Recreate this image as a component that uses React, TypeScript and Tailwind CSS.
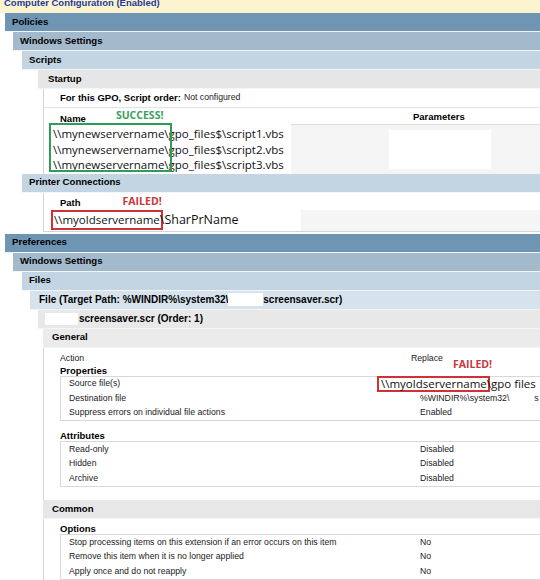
import type { ReactNode } from "react";

const SANS = "font-['Liberation_Sans',Arial,sans-serif]";
const CAL = "font-['Open_Sans','Noto_Sans',sans-serif]";

function Bar({ className, children }: { className: string; children: ReactNode }) {
  return (
    <div
      className={
        "h-[19px] flex items-center border-b border-[#f2f5f8] font-bold text-black whitespace-nowrap overflow-hidden " +
        className
      }
    >
      {children}
    </div>
  );
}

function Row({ label, value, w = "w-[351px]" }: { label: string; value?: ReactNode; w?: string }) {
  return (
    <div className="h-[14.5px] flex items-center pl-[8px] text-[8.7px] text-[#222] whitespace-nowrap">
      <span className={w + " shrink-0"}>{label}</span>
      {value}
    </div>
  );
}

function BoxTitle({ children, className = "" }: { children: ReactNode; className?: string }) {
  return (
    <div className={"h-[10px] leading-[10px] flex items-center pl-[16px] text-[9.5px] font-bold text-black " + className}>
      {children}
    </div>
  );
}

export default function App() {
  const scripts = ["script1.vbs", "script2.vbs", "script3.vbs"];
  return (
    <div className={"w-[540px] h-[580px] overflow-hidden bg-white " + SANS}>
      <div className="h-[13px] overflow-hidden bg-[#fcf4cf]">
        <div className="-mt-[4px] pl-[4px] leading-[13px] text-[9.5px] font-bold text-[#25399a] whitespace-nowrap">
          Computer Configuration (Enabled)
        </div>
      </div>

      {/* Policies */}
      <Bar className="ml-[5px] pl-[7px] bg-[#6f95b5] text-[9.6px]">Policies</Bar>
      <div className="ml-[13px]">
        <Bar className="pl-[7px] bg-[#a3bacd] text-[9.6px]">Windows Settings</Bar>
        <div className="ml-[9px]">
          <Bar className="pl-[7px] bg-[#c3d5e2] text-[9.6px]">Scripts</Bar>
          <div className="ml-[16px]">
            <Bar className="pl-[10px] bg-[#e6e6e6] text-[9.6px]">Startup</Bar>
            <div className="ml-[5px] border-l border-[#d4d4d4]">
              <div className="h-[19px] flex items-center pl-[16px] border-b border-[#e2e2e2] text-[9.5px] whitespace-nowrap">
                <span className="font-bold">For this GPO, Script order:</span>
                <span className="ml-[3px] text-[8.7px] text-[#222]">Not configured</span>
              </div>
              <div className="h-[17px] flex">
                <div className="w-[247px] shrink-0 flex items-end pl-[16px] leading-[12px]">
                  <span className="text-[9.5px] font-bold">Name</span>
                  <span className={"ml-[30px] mb-[4px] text-[10.5px] font-bold text-[#3a9e5f] " + CAL}>SUCCESS!</span>
                </div>
                <div className="flex-1 flex items-end pb-[1px] leading-[12px] border-b border-[#dcdcdc] pl-[122px] text-[9.5px] font-bold">
                  Parameters
                </div>
              </div>
              <div className="relative flex">
                <div className={"w-[247px] shrink-0 pt-[1px] pb-[1px] text-[11.5px] text-[#111] " + CAL}>
                  {scripts.map((s) => (
                    <div key={s} className="h-[15.5px] leading-[15.5px] pl-[9px] whitespace-nowrap">
                      {"\\\\mynewservername\\gpo_files$\\" + s}
                    </div>
                  ))}
                </div>
                <div className="flex-1 bg-[#f5f5f5] pl-[98px] py-[5px]">
                  <div className="w-[102px] h-full bg-white" />
                </div>
                <div className="absolute left-[5px] -top-[2px] w-[123px] h-[49px] border-2 border-[#2f9c5c]" />
              </div>
            </div>
          </div>
          <Bar className="pl-[7px] bg-[#c3d5e2] text-[9.6px]">Printer Connections</Bar>
          <div className="ml-[21px] border-l border-b border-[#d4d4d4]">
            <div className="h-[17px] flex items-end pl-[16px] leading-[12px]">
              <span className="mb-[1px] text-[9.5px] font-bold">Path</span>
              <span className={"ml-[42px] mb-[3px] text-[10.5px] font-bold text-[#c8383c] " + CAL}>FAILED!</span>
            </div>
            <div className="h-[21px] flex">
              <div className={"w-[257px] shrink-0 flex items-center pl-[7px] text-[11.5px] text-[#111] whitespace-nowrap " + CAL}>
                <span className="border-2 border-[#cf3236] pl-[1px] pr-[1px] leading-[16px]">{"\\\\myoldservername"}</span>
                <span className="-ml-[3px] text-[12.5px]">{"\\SharPrName"}</span>
              </div>
              <div className="flex-1 bg-[#f5f5f5]" />
            </div>
          </div>
        </div>
      </div>

      {/* Preferences */}
      <Bar className="mt-[2px] ml-[5px] pl-[7px] bg-[#6f95b5] text-[9.6px]">Preferences</Bar>
      <div className="ml-[13px]">
        <Bar className="pl-[7px] bg-[#a3bacd] text-[9.6px]">Windows Settings</Bar>
        <div className="ml-[9px]">
          <Bar className="pl-[7px] bg-[#c3d5e2] text-[9.6px]">Files</Bar>
          <div className="ml-[8px]">
            <Bar className="pl-[9px] bg-[#d7e3ec] text-[10px]">
              <span>File (Target Path: %WINDIR%\system32\</span>
              <span className="w-[35px] h-[13px] bg-white" />
              <span>screensaver.scr)</span>
            </Bar>
            <div className="ml-[8px]">
              <Bar className="pl-[7px] bg-[#e8e8e8] text-[10px]">
                <span className="w-[33px] h-[12px] bg-white mr-[1px]" />
                <span>screensaver.scr (Order: 1)</span>
              </Bar>
              <div className="ml-[5px]">
                <Bar className="pl-[9px] bg-[#ebebeb] text-[9.6px]">General</Bar>
                <div className="relative border-l border-[#d4d4d4] pt-[4px] pb-[13.5px]">
                  <div className="h-[14px] flex items-center pl-[16px] text-[8.7px] text-[#222] whitespace-nowrap">
                    <span className="w-[351px] shrink-0">Action</span>
                    <span>Replace</span>
                  </div>
                  <BoxTitle>Properties</BoxTitle>
                  <span
                    className={
                      "absolute left-[409px] top-[10px] leading-[12px] text-[10.5px] font-bold text-[#c8383c] " + CAL
                    }
                  >
                    FAILED!
                  </span>
                  <div className="ml-[16px] border border-r-0 border-[#d8d8d8]">
                    <div className="h-[14.5px] flex items-center pl-[8px] text-[8.7px] text-[#222] whitespace-nowrap">
                      <span className="w-[308px] shrink-0">Source file(s)</span>
                      <span
                        className={
                          "border-2 border-[#cf3236] pl-[2px] pr-[1px] leading-[12px] text-[11.5px] text-[#111] " + CAL
                        }
                      >
                        {"\\\\myoldservername"}
                      </span>
                      <span className={"-ml-[3px] text-[11.5px] text-[#111] " + CAL}>{"\\gpo files"}</span>
                    </div>
                    <Row
                      label="Destination file"
                      value={
                        <>
                          <span>%WINDIR%\system32\</span>
                          <span className="ml-[25px]">s</span>
                        </>
                      }
                    />
                    <Row label="Suppress errors on individual file actions" value="Enabled" />
                  </div>
                  <BoxTitle className="mt-[10px]">Attributes</BoxTitle>
                  <div className="ml-[16px] border border-r-0 border-[#d8d8d8]">
                    <Row label="Read-only" value="Disabled" />
                    <Row label="Hidden" value="Disabled" />
                    <Row label="Archive" value="Disabled" />
                  </div>
                </div>
                <Bar className="pl-[9px] bg-[#e7e7e7] text-[9.6px]">Common</Bar>
                <div className="border-l border-[#d4d4d4] pt-[5px]">
                  <BoxTitle>Options</BoxTitle>
                  <div className="ml-[16px] border border-r-0 border-[#d8d8d8]">
                    <Row label="Stop processing items on this extension if an error occurs on this item" value="No" />
                    <Row label="Remove this item when it is no longer applied" value="No" />
                    <Row label="Apply once and do not reapply" value="No" />
                  </div>
                </div>
              </div>
            </div>
          </div>
        </div>
      </div>
    </div>
  );
}
